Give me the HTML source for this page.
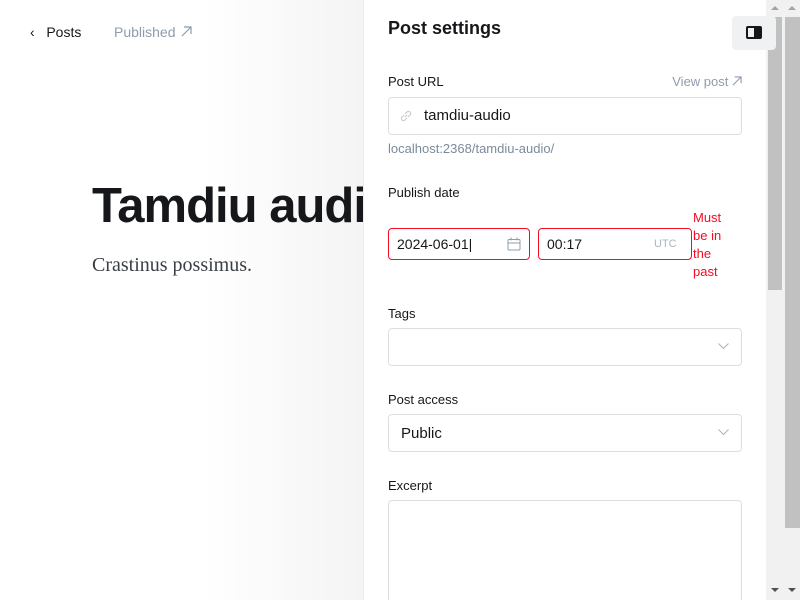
<!DOCTYPE html>
<html><head><style>
*{box-sizing:border-box;margin:0;padding:0}
html,body{width:800px;height:600px;overflow:hidden}
body{background:#fff;font-family:"Liberation Sans",sans-serif;position:relative;color:#15171a}
.left{position:absolute;left:0;top:0;width:364px;height:600px;background:linear-gradient(90deg,#fff 0,#fff 200px,#f4f4f5 364px)}
.nav{position:absolute;top:24px;left:30px;font-size:14px}
.panel{position:absolute;left:363px;top:0;width:403px;height:600px;background:#fff;border-left:1px solid #ececec;overflow:hidden}
.lbl{position:absolute;left:24px;font-size:13px;color:#15171a}
.inp{position:absolute;left:24px;width:354px;height:38px;border:1px solid #dcdfe2;border-radius:4px;font-size:15px}
.sb{position:absolute;top:0;height:600px;width:17px;background:#f1f1f1}
.th{position:absolute;background:#c1c1c1}
.arr{position:absolute;width:0;height:0;border-left:4px solid transparent;border-right:4px solid transparent}
.chev{position:absolute;right:12px;top:14px}
</style></head><body>
<div class="left">
 <div class="nav" style="color:#15171a">&lsaquo;&nbsp;&nbsp; Posts</div>
 <div class="nav" style="left:114px;color:#8e9cac">Published <svg width="11" height="11" viewBox="0 0 11 11" style="margin-left:2px"><path d="M1 10L10 1M3 1h7v7" fill="none" stroke="#8e9cac" stroke-width="1.2"/></svg></div>
 <div style="position:absolute;left:92px;top:178px;font-size:49px;font-weight:bold;letter-spacing:-1px;white-space:nowrap">Tamdiu audi</div>
 <div style="position:absolute;left:92px;top:254px;font-size:20px;font-family:'Liberation Serif',serif;color:#3a3f45">Crastinus possimus.</div>
</div>
<div class="panel">
 <div style="position:absolute;left:24px;top:18px;font-size:18px;font-weight:bold">Post settings</div>
 <div class="lbl" style="top:74px">Post URL</div>
 <div style="position:absolute;right:24px;top:74px;font-size:13px;color:#8e9cac">View post <svg width="10" height="10" viewBox="0 0 11 11"><path d="M1 10L10 1M3 1h7v7" fill="none" stroke="#8e9cac" stroke-width="1.2"/></svg></div>
 <div class="inp" style="top:97px"><svg style="position:absolute;left:10px;top:11px" width="14" height="14" viewBox="0 0 14 14"><path d="M6 8l2-2M5 6L3 8a2 2 0 0 0 3 3l2-2M9 8l2-2a2 2 0 0 0-3-3L6 5" fill="none" stroke="#c8ccd0" stroke-width="1.2"/></svg><span style="position:absolute;left:35px;top:9px">tamdiu-audio</span></div>
 <div style="position:absolute;left:24px;top:141px;font-size:13px;color:#7c8b9a">localhost:2368/tamdiu-audio/</div>
 <div class="lbl" style="top:185px">Publish date</div>
 <div class="inp" style="top:228px;width:142px;height:32px;border-color:#f50b23;font-size:14px"><span style="position:absolute;left:8px;top:7px">2024-06-01|</span><svg style="position:absolute;left:118px;top:8px" width="14" height="14" viewBox="0 0 14 14"><rect x="1" y="2.5" width="12" height="10.5" rx="1" fill="none" stroke="#8e9cac"/><path d="M1 6h12M4 0.5v3M10 0.5v3" stroke="#8e9cac"/></svg></div>
 <div class="inp" style="left:174px;top:228px;width:154px;height:32px;border-color:#f50b23;font-size:14px"><span style="position:absolute;left:8px;top:7px">00:17</span><span style="position:absolute;left:115px;top:9px;font-size:11px;color:#aab4bf">UTC</span></div>
 <div style="position:absolute;left:329px;top:209px;font-size:13px;line-height:18px;color:#f50b23;width:40px">Must be in the past</div>
 <div class="lbl" style="top:306px">Tags</div>
 <div class="inp" style="top:328px"><svg class="chev" width="11" height="7" viewBox="0 0 11 7"><path d="M0.5 0.5l5 5 5-5" fill="none" stroke="#aab4bf"/></svg></div>
 <div class="lbl" style="top:392px">Post access</div>
 <div class="inp" style="top:414px"><span style="position:absolute;left:12px;top:10px">Public</span><svg class="chev" width="11" height="7" viewBox="0 0 11 7"><path d="M0.5 0.5l5 5 5-5" fill="none" stroke="#aab4bf"/></svg></div>
 <div class="lbl" style="top:478px">Excerpt</div>
 <div class="inp" style="top:500px;height:110px"></div>
</div>
<div class="sb" style="left:766px"><div class="th" style="left:2px;width:14px;top:17px;height:273px"></div><div class="arr" style="left:5px;top:6px;border-bottom:4px solid #a3a3a3"></div><div class="arr" style="left:5px;top:588px;border-top:4px solid #505050"></div></div>
<div class="sb" style="left:783px"><div class="th" style="left:2px;width:15px;top:17px;height:511px"></div><div class="arr" style="left:5px;top:6px;border-bottom:4px solid #a3a3a3"></div><div class="arr" style="left:5px;top:588px;border-top:4px solid #505050"></div></div>
<div style="position:absolute;left:732px;top:16px;width:44px;height:34px;background:#eff1f2;border-radius:4px;z-index:5"><div style="position:absolute;left:14px;top:10px;width:16px;height:13px;border:2px solid #15171a;border-radius:2px"><div style="position:absolute;right:0;top:0;width:6px;height:100%;background:#15171a"></div></div></div>
</body></html>
